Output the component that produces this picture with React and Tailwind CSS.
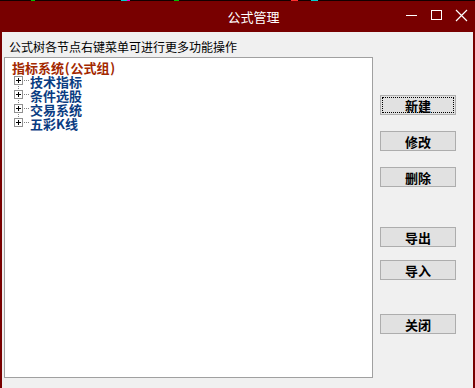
import React from 'react'

const cjk = { fontFamily: '"SimSun", "Noto Sans CJK SC", sans-serif' }

const children = ['技术指标', '条件选股', '交易系统', '五彩K线']

const buttons = [
  { label: '新建', mt: 'mt-[38px]', focus: true },
  { label: '修改', mt: 'mt-[16px]' },
  { label: '删除', mt: 'mt-[16px]' },
  { label: '导出', mt: 'mt-[40px]' },
  { label: '导入', mt: 'mt-[13px]' },
  { label: '关闭', mt: 'mt-[34px]' },
]

function TreeBranch({ last }) {
  return (
    <svg width="16" height="14" className="shrink-0">
      {/* vertical dotted connector */}
      {[0, 2, 4, 6, 8, 10, 12].filter(y => !last || y < 6).map(y => (
        <rect key={'v' + y} x="4" y={y} width="1" height="1" fill="#808080" />
      ))}
      {/* horizontal dotted connector */}
      {[10, 12, 14].map(x => (
        <rect key={'h' + x} x={x} y="6" width="1" height="1" fill="#808080" />
      ))}
      <rect x="0.5" y="2.5" width="8" height="8" fill="#fff" stroke="#919191" />
      <path d="M2 6.5h5M4.5 4v5" stroke="#000" />
    </svg>
  )
}

export default function App() {
  return (
    <div className="w-[475px] h-[388px] flex flex-col bg-[#780000] overflow-hidden" style={cjk}>
      <div className="h-px flex bg-[#120000]">
        <span className="ml-[31px] w-[4px] bg-[#00c000]" />
        <span className="ml-[86px] w-[6px] bg-[#00d0d0]" />
        <span className="w-[3px] bg-[#e000e0]" />
        <span className="ml-[44px] w-[5px] bg-[#00c000]" />
        <span className="ml-[112px] w-[7px] bg-[#ff3030]" />
        <span className="ml-[13px] w-[7px] bg-[#00d0d0]" />
      </div>

      <div className="h-[31px] flex items-center">
        <div className="flex-1 pl-[107px] text-center text-white text-[13px] leading-none">公式管理</div>
        <svg width="75" height="31" className="shrink-0">
          <path d="M6 14.5h11" stroke="#fff" />
          <rect x="31.5" y="9.5" width="10" height="9" fill="none" stroke="#fff" />
          <path d="M56 9l11 11M67 9l-11 11" stroke="#fff" strokeWidth="1.2" />
        </svg>
      </div>

      <div className="flex-1 mx-[2px] bg-[#f0f0f0] flex flex-col">
        <div className="pt-[7px] pl-[7px] text-[12px] leading-[16px] text-black">
          公式树各节点右键菜单可进行更多功能操作
        </div>
        <div className="flex mt-[2px] pl-[2px]">
          <div className="w-[369px] h-[321px] bg-white border border-[#a0a0a0] pt-[2px]">
            <div className="h-[14px] flex items-center pl-[7px] text-[13px] font-bold text-[#a32800] leading-[13px]">
              指标系统<span className="inline-block w-[6.5px] text-center">(</span>公式组<span className="inline-block w-[6.5px] text-center">)</span>
            </div>
            {children.map((c, i) => (
              <div key={c} className="h-[14px] flex items-center pl-[9px]">
                <TreeBranch last={i === children.length - 1} />
                <span className="text-[13px] font-bold text-[#0a3c82] leading-[13px]">{c}</span>
              </div>
            ))}
          </div>
          <div className="ml-[7px] flex flex-col">
            {buttons.map(b => (
              <button
                key={b.label}
                className={`${b.mt} w-[76px] h-[20px] bg-[#e1e1e1] border border-[#adadad] text-[13px] font-bold text-black leading-none flex items-center justify-center ${b.focus ? 'outline outline-1 outline-dotted outline-black outline-offset-[-3px]' : ''}`}
              >
                {b.label}
              </button>
            ))}
          </div>
        </div>
      </div>
    </div>
  )
}
